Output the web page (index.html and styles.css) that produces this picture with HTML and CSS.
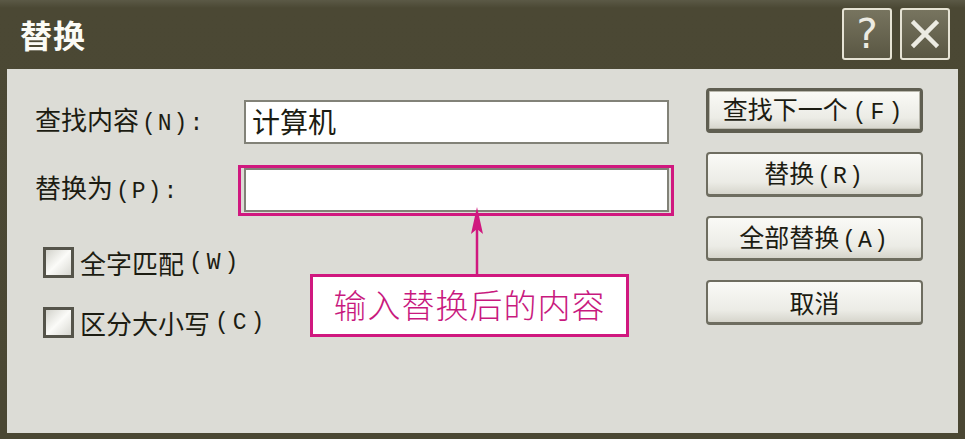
FILE: index.html
```html
<!DOCTYPE html>
<html lang="zh-CN">
<head>
  <meta charset="UTF-8">
  <title>替换</title>
  <link rel="stylesheet" href="styles.css">
</head>
<body>
  <div class="window">
    <div class="titlebar">
      <span class="title">替换</span>
      <div class="caption-btns">
        <span class="cap-btn help">?</span>
        <span class="cap-btn close">
          <svg width="30" height="30" viewBox="0 0 30 30">
            <path d="M4 4 L26 26 M26 4 L4 26" stroke="#ecebe2" stroke-width="4.5" stroke-linecap="square"/>
          </svg>
        </span>
      </div>
    </div>

    <div class="panel">
      <div class="form">
        <div class="fields">
          <label class="field-label">查找内容<span class="key">(N):</span></label>
          <div class="textbox">计算机</div>
          <label class="field-label">替换为<span class="key">(P):</span></label>
          <div class="textbox marked"></div>
        </div>

        <div class="options">
          <div class="option"><span class="check"></span>全字匹配<span class="key wide">(W)</span></div>
          <div class="option"><span class="check"></span>区分大小写<span class="key wide">(C)</span></div>
        </div>
      </div>

      <div class="buttons">
        <button class="btn default">查找下一个<span class="key wide">(F)</span></button>
        <button class="btn">替换<span class="key">(R)</span></button>
        <button class="btn">全部替换<span class="key">(A)</span></button>
        <button class="btn">取消</button>
      </div>

      <!-- annotation over the dialog -->
      <svg class="arrow" width="20" height="68" viewBox="0 0 20 68">
        <path d="M10 6 L10 68" stroke="#d0187f" stroke-width="2.5"/>
        <path d="M10 0 L16 27 L10 22 L4 27 Z" fill="#d0187f"/>
      </svg>
      <div class="callout">输入替换后的内容</div>
    </div>
  </div>
</body>
</html>
```

FILE: styles.css
```css
/* Windows XP style "替换" dialog */
body {
  margin: 0;
  padding: 0;
  background-color: #4a4733;
  font-family: "Noto Sans CJK SC", "Liberation Sans", sans-serif;
}

.window {
  width: 965px;
  height: 439px;
  display: flex;
  flex-direction: column;
  background: linear-gradient(#5b5946 0, #4b4834 8px, #4a4733 100%);
}

.titlebar {
  height: 69px;
  display: flex;
  align-items: center;
  justify-content: space-between;
  padding: 0 15px 0 20px;
  box-sizing: border-box;
}

.title {
  color: #fbfbf6;
  font-size: 32px;
  font-weight: bold;
  letter-spacing: 1px;
  margin-top: -2px;
}

.caption-btns {
  display: flex;
  gap: 8px;
  margin-top: -2px;
}

.cap-btn {
  width: 46px;
  height: 48px;
  border: 2px solid #e6e3d4;
  border-radius: 3px;
  background: linear-gradient(#77745f, #5a5743);
  display: flex;
  align-items: center;
  justify-content: center;
  box-sizing: content-box;
}

.help {
  color: #ecebe2;
  font-family: "DejaVu Sans", sans-serif;
  font-size: 40px;
  line-height: 1;
}

/* light grey client area */
.panel {
  position: relative;
  flex: 1;
  margin: 0 7px 6px 7px;
  background-color: #dcdcd6;
  display: flex;
  color: #1c1c12;
}

.form {
  padding: 28px 0 0 28px;
}

.fields {
  display: grid;
  grid-template-columns: 209px 425px;
  row-gap: 19px;
  align-items: center;
}

.field-label {
  font-size: 26px;
  line-height: 44px;
}

/* shortcut letters, drawn like the old bitmap font */
.key {
  font-family: "Liberation Mono", monospace;
  font-size: 23px;
  letter-spacing: 2px;
  margin-left: 3px;
}

.key.wide {
  letter-spacing: 4px;
  margin-left: 5px;
}

.textbox {
  height: 44px;
  box-sizing: border-box;
  border: 2px solid #828278;
  background-color: #fff;
  font-size: 28px;
  line-height: 38px;
  padding-left: 6px;
}

.marked {
  position: relative;
}

.marked::after {
  content: "";
  position: absolute;
  top: -5px;
  left: -8px;
  right: -7px;
  bottom: -6px;
  border: 3px solid #d0187f;
}

.options {
  margin: 33px 0 0 8px;
  display: flex;
  flex-direction: column;
  gap: 29px;
}

.option {
  display: flex;
  align-items: center;
  font-size: 26px;
  height: 31px;
}

.check {
  width: 25px;
  height: 25px;
  border: 3px solid #55544a;
  background: linear-gradient(135deg, #d2d2cb, #fbfbf8 50%, #d8d8d2);
  margin-right: 6px;
}

.buttons {
  margin: 19px 0 0 37px;
  display: flex;
  flex-direction: column;
  gap: 19px;
}

.btn {
  width: 217px;
  height: 45px;
  font-family: "Noto Sans CJK SC", "Liberation Sans", sans-serif;
  font-size: 25px;
  color: #1c1c12;
  border: 2px solid #6e6d60;
  border-bottom-width: 3px;
  border-radius: 4px;
  background: linear-gradient(#fafaf6, #ececE6 70%, #d6d5cc);
  padding: 0;
  line-height: 1;
}

.btn.default {
  border: 3px solid #5f5e51;
  border-bottom-width: 4px;
  box-shadow: inset 0 0 0 1px #b9b8ad;
}

.arrow {
  position: absolute;
  left: 460px;
  top: 138px;
}

.callout {
  position: absolute;
  left: 303px;
  top: 205px;
  width: 319px;
  height: 63px;
  box-sizing: border-box;
  border: 3px solid #d0187f;
  background-color: #fff;
  color: #c8197e;
  font-size: 33px;
  font-weight: 300;
  line-height: 55px;
  text-align: center;
  letter-spacing: 1px;
}
```
